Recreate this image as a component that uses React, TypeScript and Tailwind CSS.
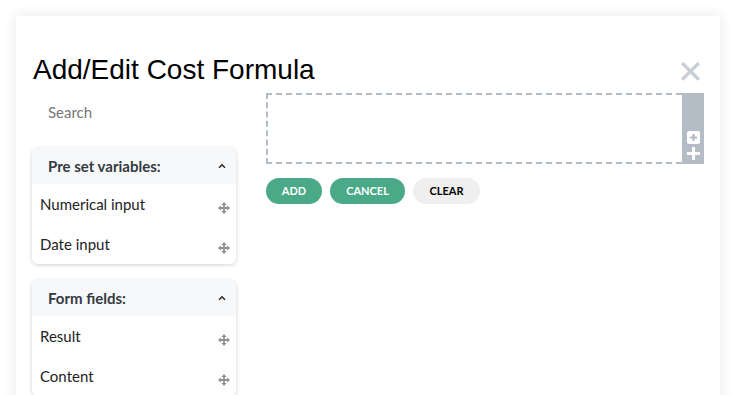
import { ChevronUp } from "lucide-react";

function MoveIcon() {
  return (
    <svg width="12" height="12" viewBox="0 0 12 12" className="text-[#8f8f8f]">
      <path d="M6 0 L8.6 2.9 H6.9 V5.1 H9.1 V3.4 L12 6 L9.1 8.6 V6.9 H6.9 V9.1 H8.6 L6 12 L3.4 9.1 H5.1 V6.9 H2.9 V8.6 L0 6 L2.9 3.4 V5.1 H5.1 V2.9 H3.4 Z" fill="currentColor" />
    </svg>
  );
}

function Panel({ title, items }: { title: string; items: string[] }) {
  return (
    <div className="w-[204px] overflow-hidden rounded-md bg-white shadow-[0_1px_4px_rgba(0,0,0,0.18)]">
      <div className="flex h-9 items-center justify-between bg-[#f7f8fa] pl-4 pr-[9px]">
        <span className="text-[15px] font-bold text-[#333a40]">{title}</span>
        <ChevronUp size={10} strokeWidth={4} className="text-[#333]" />
      </div>
      {items.map((item) => (
        <div key={item} className="flex h-10 items-center justify-between pl-2 pr-[6px]">
          <span className="text-[15px] text-[#222]">{item}</span>
          <span className="mt-2">
            <MoveIcon />
          </span>
        </div>
      ))}
    </div>
  );
}

export default function App() {
  return (
    <div className="h-[395px] w-[734px] overflow-hidden bg-white pl-4 pt-4 font-['Lato','Noto_Sans',sans-serif]">
      <div className="h-[400px] w-[704px] bg-white shadow-[0_0_14px_rgba(0,0,0,0.09)]">
        <div className="flex items-center justify-between pl-[17px] pr-[16px] pt-[36px]">
          <h1 className="font-['Liberation_Sans',Arial,sans-serif] text-[28px] leading-8 text-black">
            Add/Edit Cost Formula
          </h1>
          <span className="mt-1 font-['Liberation_Sans',Arial,sans-serif] text-[32px] font-light leading-none text-[#c9ced4]">
            ✕
          </span>
        </div>

        <div className="mt-1 flex gap-[30px] pl-4">
          <div className="flex flex-col">
            <div className="flex h-[40px] items-center pl-4 text-[15px] text-[#777]">Search</div>
            <div className="mt-[16px] flex flex-col gap-4">
              <Panel title="Pre set variables:" items={["Numerical input", "Date input"]} />
              <Panel title="Form fields:" items={["Result", "Content"]} />
            </div>
          </div>

          <div className="flex flex-col pt-[1px]">
            <div className="flex h-[71px] w-[438px]">
              <div className="flex-1 border-2 border-r-0 border-dashed border-[#b4bcc6]" />
              <div className="flex w-[22px] flex-col items-center justify-end bg-[#b4bcc6] pb-[3px]">
                <div className="flex h-[13px] w-[13px] items-center justify-center rounded-[2px] bg-white">
                  <svg width="9" height="9" viewBox="0 0 9 9">
                    <path d="M4.5 1 V8 M1 4.5 H8" stroke="#b4bcc6" strokeWidth="2.2" />
                  </svg>
                </div>
                <svg width="15" height="15" viewBox="0 0 15 15" className="mt-[2px]">
                  <path d="M7.5 1 V14 M1 7.5 H14" stroke="#fff" strokeWidth="3" />
                </svg>
              </div>
            </div>
            <div className="mt-[14px] flex gap-2 text-[11px] font-bold">
              <button className="h-[26px] w-[56px] rounded-full bg-[#4aa986] text-white">ADD</button>
              <button className="h-[26px] w-[75px] rounded-full bg-[#4aa986] text-white">CANCEL</button>
              <button className="h-[26px] w-[67px] rounded-full bg-[#efefef] text-black">CLEAR</button>
            </div>
          </div>
        </div>
      </div>
    </div>
  );
}
